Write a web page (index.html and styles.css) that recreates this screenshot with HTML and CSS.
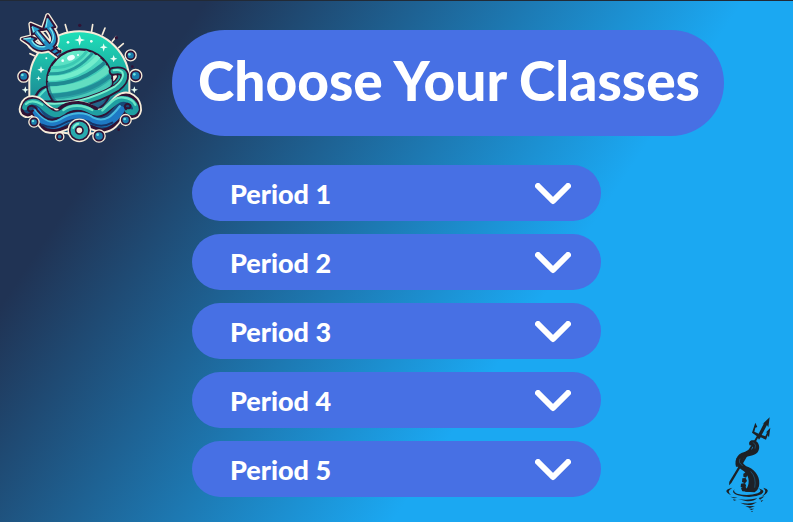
FILE: index.html
```html
<!DOCTYPE html>
<html lang="en">
<head>
<meta charset="utf-8">
<meta name="viewport" content="width=device-width, initial-scale=1">
<title>Choose Your Classes</title>
<link rel="stylesheet" href="styles.css">
</head>
<body>
<div class="page">
  <header class="header">
    <svg class="logo" viewBox="0 0 420 420" aria-hidden="true">
      <defs>
        <linearGradient id="sky" x1="0" y1="0" x2="0" y2="1">
          <stop offset="0" stop-color="#1ee0b8"/><stop offset=".6" stop-color="#1c8f97"/><stop offset="1" stop-color="#1a4a78"/>
        </linearGradient>
        <linearGradient id="planet" x1=".3" y1="0" x2=".6" y2="1">
          <stop offset="0" stop-color="#6df0cc"/><stop offset=".55" stop-color="#35c4b4"/><stop offset="1" stop-color="#17557f"/>
        </linearGradient>
        <linearGradient id="fork" x1="0" y1="0" x2="1" y2="1">
          <stop offset="0" stop-color="#37bfe0"/><stop offset="1" stop-color="#1978b8"/>
        </linearGradient>
        <clipPath id="ball"><circle cx="209" cy="222" r="97"/></clipPath>
      </defs>
      <g stroke="#f6ecd9" stroke-width="5" stroke-linecap="round">
        <path d="M166 50l6 21M248 50l-4 25M285 60l-8 20M318 86l-11 14M340 107l-14 12M60 137l13 6"/>
      </g>
      <g fill="#311234"><circle cx="209" cy="52" r="5"/><circle cx="319" cy="89" r="5"/><circle cx="367" cy="176" r="4"/><circle cx="326" cy="365" r="4"/><circle cx="93" cy="364" r="4"/></g>
      <path d="M58 260V220A150 150 0 0 1 358 220V280L330 340Q290 378 245 376Q209 404 173 376Q118 374 90 342L58 290Z" fill="url(#sky)" stroke="#f6ecd9" stroke-width="6"/>
      <g fill="#eafff4">
        <path d="M209 80l4 12 12 4-12 4-4 13-4-13-12-4 12-4zM281 106l3 9 9 3-9 3-3 10-3-10-9-3 9-3zM311 141l3 8 8 3-8 3-3 8-3-8-8-3 8-3zM93 174l3 8 8 3-8 3-3 8-3-8-8-3 8-3zM86 203l2 6 6 2-6 2-2 6-2-6-6-2 6-2zM46 235l3 8 8 2-8 3-3 8-3-8-8-3 8-2zM373 235l3 8 8 2-8 3-3 8-3-8-8-3 8-2z"/>
        <circle cx="174" cy="103" r="4"/><circle cx="244" cy="100" r="4"/><circle cx="109" cy="151" r="3"/>
      </g>
      <path d="M111 236C88 240 75 263 72 279C88 290 111 284 130 279" fill="#23a5ab" stroke="#311234" stroke-width="7"/>
      <path d="M110 242Q88 260 79 278" fill="none" stroke="#5de4cc" stroke-width="6"/>
      <circle cx="209" cy="222" r="98" fill="url(#planet)" stroke="#311234" stroke-width="7"/>
      <g clip-path="url(#ball)" fill="none">
        <path d="M120 178Q190 185 232 128" stroke="#3bc9b3" stroke-width="9"/>
        <path d="M105 196Q190 208 254 128" stroke="#249c9c" stroke-width="9"/>
        <path d="M110 211Q208 214 270 140" stroke="#73edcc" stroke-width="14"/>
        <path d="M110 229Q215 230 292 157" stroke="#1f8992" stroke-width="12"/>
        <path d="M112 246Q230 244 302 176" stroke="#62dec1" stroke-width="20"/>
        <path d="M125 264Q240 258 310 196" stroke="#218d98" stroke-width="13"/>
        <path d="M135 281Q245 274 312 216" stroke="#48c8b8" stroke-width="14"/>
        <path d="M114 225Q116 263 141 285" stroke="#1a657f" stroke-width="10" opacity=".65"/>
        <path d="M302 190Q312 247 270 294L220 320L310 320Z" fill="#184d78" opacity=".6"/>
        <path d="M221 303l52-23M236 311l55-33" stroke="#285f89" stroke-width="5"/>
      </g>
      <ellipse cx="183" cy="149" rx="12" ry="8" transform="rotate(-20 183 149)" fill="#efffff"/>
      <circle cx="158" cy="158" r="4" fill="#efffff"/><circle cx="204" cy="141" r="3" fill="#efffff"/>
      <g fill="none" stroke-linecap="round">
        <path d="M309 190C356 180 352 216 320 240C262 276 169 303 92 288" stroke="#311234" stroke-width="26"/>
        <path d="M309 190C356 180 352 216 320 240C262 276 169 303 92 288" stroke="#22a69e" stroke-width="15"/>
        <path d="M311 187C349 181 346 210 315 235C258 268 169 296 96 284" stroke="#7cf0cf" stroke-width="6"/>
      </g>
      <path d="M307 202Q327 196 322 208Q316 220 308 224Z" fill="#f6ecd9" stroke="#311234" stroke-width="4"/>
      <path d="M38 295C48 263 82 266 102 290C122 309 142 321 158 304C183 280 227 286 250 306C282 327 303 287 323 270C357 246 387 275 386 306C383 331 352 331 344 311C327 325 323 358 281 366C260 369 252 350 208 349C163 350 153 376 109 365C85 354 83 321 65 315C54 327 30 318 38 295Z" fill="none" stroke="#f6ecd9" stroke-width="20" stroke-linejoin="round" clip-path="url(#outer)"/>
      <path d="M38 295C48 263 82 266 102 290C122 309 142 321 158 304C183 280 227 286 250 306C282 327 303 287 323 270C357 246 387 275 386 306C383 331 352 331 344 311C327 325 323 358 281 366C260 369 252 350 208 349C163 350 153 376 109 365C85 354 83 321 65 315C54 327 30 318 38 295Z" fill="#174979" stroke="#311234" stroke-width="9" stroke-linejoin="round"/>
      <path d="M88 281Q108 302 132 309M146 305Q163 286 205 285Q238 289 263 306" fill="none" stroke="#311234" stroke-width="12"/>
      <g fill="none" stroke-linecap="round">
        <path d="M80 311C99 348 132 358 155 343C185 322 225 319 249 339C288 358 316 332 332 306" stroke="#1e79c4" stroke-width="24"/>
        <path d="M76 306C105 341 126 347 149 335C186 311 225 310 250 329C286 347 309 320 330 294" stroke="#46b9df" stroke-width="6"/>
        <path d="M96 350C132 366 152 351 173 340C203 330 231 337 248 348Q278 360 307 344" stroke="#173367" stroke-width="6"/>
        <path d="M82 307C108 338 129 342 148 327C185 302 225 303 252 322C280 333 300 309 317 287" stroke="#311234" stroke-width="6"/>
        <path d="M45 298C51 278 76 275 95 292C119 315 137 328 157 313C184 289 221 294 248 312C280 325 303 285 326 276C351 265 377 284 378 304Q371 320 353 308" stroke="#1f9fa2" stroke-width="17"/>
        <path d="M48 288C62 274 81 281 97 290M160 306C184 287 221 291 247 306M277 307C304 282 316 264 341 269Q367 271 376 290" stroke="#69e6c7" stroke-width="7"/>
        <path d="M69 308C56 316 48 301 58 295Q68 289 80 303M348 304C337 290 355 282 361 292Q363 303 350 300" stroke="#311234" stroke-width="6"/>
      </g>
      <g fill="#197eae" stroke="#311234" stroke-width="5">
        <g stroke="#f6ecd9" stroke-width="13"><circle cx="41" cy="205" r="13"/><circle cx="362" cy="142" r="12"/><circle cx="377" cy="203" r="14"/><circle cx="72" cy="342" r="11"/><circle cx="347" cy="336" r="12"/><circle cx="149" cy="386" r="8"/><circle cx="267" cy="384" r="14"/><circle cx="208" cy="367" r="29"/></g>
        <circle cx="41" cy="205" r="13"/><circle cx="362" cy="142" r="12"/><circle cx="377" cy="203" r="14"/><circle cx="72" cy="342" r="11"/><circle cx="347" cy="336" r="12"/><circle cx="149" cy="386" r="8"/><circle cx="267" cy="384" r="14"/>
        <circle cx="208" cy="367" r="29" fill="#28aaae"/><circle cx="208" cy="367" r="11" fill="#f6ecd9"/>
      </g>
      <g fill="#70e0df"><circle cx="37" cy="201" r="4"/><circle cx="358" cy="139" r="4"/><circle cx="373" cy="199" r="4"/><circle cx="69" cy="339" r="4"/><circle cx="344" cy="333" r="4"/><circle cx="263" cy="380" r="4"/></g>
      <path d="M190 360Q194 349 205 347" fill="none" stroke="#83f0d4" stroke-width="6" stroke-linecap="round"/>
      <g stroke-linejoin="round">
        <g fill="none" stroke-linecap="butt">
          <path d="M60 97Q78 132 118 117Q151 99 114 55M76 68L118 117L149 140" stroke="#f6ecd9" stroke-width="31"/>
          <path d="M36 93L63 86L80 92L58 108ZM62 48L66 80L97 63ZM113 22L98 66L136 57Z" fill="#f6ecd9" stroke="#f6ecd9" stroke-width="14"/>
          <path d="M60 97Q78 132 118 117Q151 99 114 55M76 68L118 117L149 140" stroke="#311234" stroke-width="20"/>
          <path d="M36 93L63 86L80 92L58 108ZM62 48L66 80L97 63ZM113 22L98 66L136 57Z" fill="url(#fork)" stroke="#311234" stroke-width="6"/>
          <path d="M61 99Q79 129 116 117Q149 97 115 57M78 71L118 117L147 139" stroke="#218fc2" stroke-width="12"/>
        </g>
        <path d="M40 93L63 90M66 56L72 73M80 70L103 100M112 31L108 57M119 59Q139 83 124 105M65 97Q79 122 106 115" fill="none" stroke="#7fe7ee" stroke-width="4"/>
        <path d="M122 130L142 116M133 140L154 127" stroke="#311234" stroke-width="6"/>
      </g>
    </svg>
    <h1 class="title">Choose Your Classes</h1>
  </header>

  <main class="content">
    <form class="periods">
      <div class="period">
        <select class="period-select" aria-label="Period 1 class"><option>Period 1</option></select>
        <svg class="chevron" viewBox="0 0 36 22" aria-hidden="true"><path d="M3 3L18 18L33 3"/></svg>
      </div>
      <div class="period">
        <select class="period-select" aria-label="Period 2 class"><option>Period 2</option></select>
        <svg class="chevron" viewBox="0 0 36 22" aria-hidden="true"><path d="M3 3L18 18L33 3"/></svg>
      </div>
      <div class="period">
        <select class="period-select" aria-label="Period 3 class"><option>Period 3</option></select>
        <svg class="chevron" viewBox="0 0 36 22" aria-hidden="true"><path d="M3 3L18 18L33 3"/></svg>
      </div>
      <div class="period">
        <select class="period-select" aria-label="Period 4 class"><option>Period 4</option></select>
        <svg class="chevron" viewBox="0 0 36 22" aria-hidden="true"><path d="M3 3L18 18L33 3"/></svg>
      </div>
      <div class="period">
        <select class="period-select" aria-label="Period 5 class"><option>Period 5</option></select>
        <svg class="chevron" viewBox="0 0 36 22" aria-hidden="true"><path d="M3 3L18 18L33 3"/></svg>
      </div>
    </form>
    <svg class="kraken" viewBox="0 0 234 336" aria-hidden="true">
      <g fill="#1d2126">
        <path d="M42 226L43 215L127 76L132 79L49 219Z"/>
        <path d="M126 79L111 68L121 38L127 51L121 53L118 65L131 71L147 40L142 43L164 22L160 52L156 45L140 75L151 79L157 67L152 68L166 53L162 82L158 76L153 89L137 82L132 89Z"/>
        <path d="M105 107C98 97 106 88 117 91C133 95 137 114 128 127C116 141 91 135 84 149C80 158 88 166 100 171C125 182 137 206 132 229Q129 241 119 247L90 245C106 223 105 201 87 184C68 172 58 161 65 145C72 124 99 126 111 117C117 112 114 103 105 107Z"/>
        <path d="M63 170Q58 153 68 139Q61 157 70 170ZM84 133Q96 124 108 123L104 118Q91 123 84 133Z"/>
        <path d="M85 191l8-4 5 8-5 8-8-3zM82 205l10-1 4 9-6 7-9-4zM78 221l12-2 4 10-9 6-8-4zM78 235l14-4 10 14-20-1z"/>
        <path d="M52 233Q33 237 34 244Q36 251 48 255Q37 246 44 240ZM145 233Q160 237 158 244Q155 254 139 260Q154 248 150 241ZM61 236Q51 244 66 251Q98 260 128 250Q145 243 129 235Q155 241 139 253Q108 268 69 256Q44 247 61 236Z"/>
        <path d="M46 260l22 3-11 2zM69 267Q96 272 127 265Q114 276 92 273ZM131 264l18-5-14 10zM54 268l11 2-8 2zM76 278Q98 283 126 277L111 284Q91 287 76 278ZM91 289l29-1-15 6zM137 272l8-2-6 6zM102 296l16 0-9 4zM108 303h6l-3 3z"/>
      </g>
      <g fill="none" stroke="#1ba8f2" stroke-width="1"><path d="M114 97Q126 104 120 116M75 146Q69 159 83 167M107 184Q125 203 119 233"/></g>
    </svg>
  </main>
</div>
</body>
</html>
```
FILE: styles.css
```css
* {
  box-sizing: border-box;
}

body {
  margin: 0;
  font-family: Lato, "Open Sans", sans-serif;
  color: #fff;
}

.page {
  display: flex;
  flex-direction: column;
  min-height: 100vh;
  border-top: 1px solid #222a36;
  background: linear-gradient(124deg, #203354 18%, #1ba8f2 65%);
}

.header {
  display: flex;
  align-items: flex-start;
  gap: 22px;
  padding: 7px 69px 0 10px;
}

.logo {
  flex: none;
  width: 140px;
  height: 140px;
}

.title {
  flex: 1;
  margin: 22px 0 0;
  padding: 14px 14px 20px 16px;
  border-radius: 53px;
  background: #4770e4;
  font-size: 55px;
  line-height: 72px;
  font-weight: 900;
  text-align: center;
  white-space: nowrap;
}

.content {
  flex: 1;
  display: grid;
  grid-template-columns: 192px 1fr 192px;
  padding-top: 17px;
}

.periods {
  grid-column: 2;
  display: flex;
  flex-direction: column;
  gap: 13px;
}

.period {
  position: relative;
}

.period-select {
  display: block;
  width: 100%;
  height: 56px;
  padding: 0 72px 0 38px;
  border: 0;
  border-radius: 28px;
  appearance: none;
  background: #4770e4;
  color: #fff;
  font-family: inherit;
  font-size: 27px;
  font-weight: 900;
  cursor: pointer;
}

.chevron {
  position: absolute;
  top: 18px;
  right: 30px;
  width: 36px;
  height: 22px;
  fill: none;
  stroke: #fff;
  stroke-width: 6;
  stroke-linecap: round;
  stroke-linejoin: round;
  pointer-events: none;
}

.kraken {
  grid-column: 3;
  align-self: end;
  justify-self: end;
  width: 78px;
  height: 112px;
}
```
